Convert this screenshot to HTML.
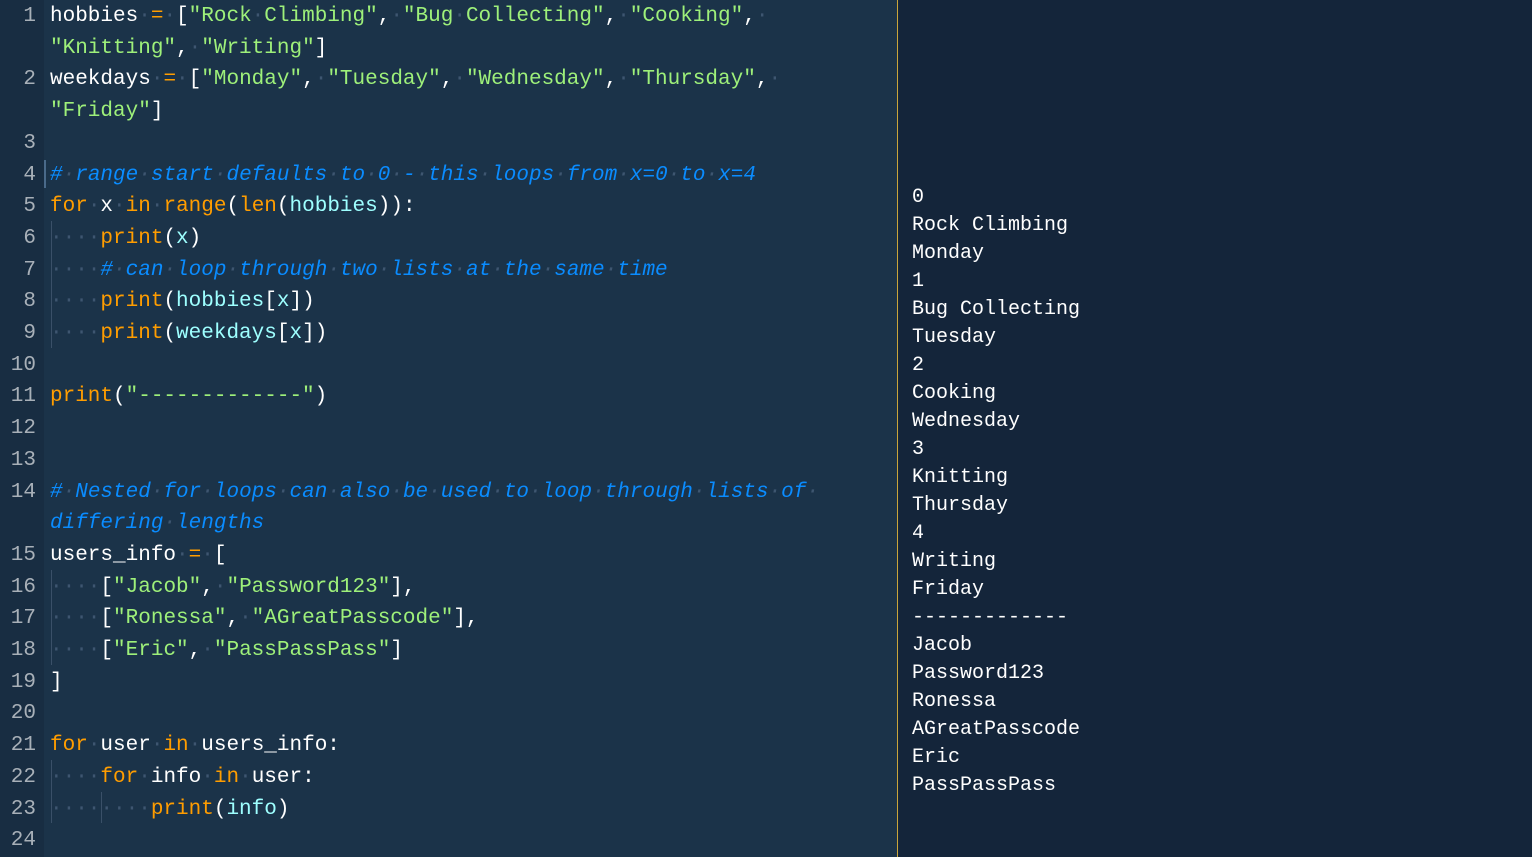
<!DOCTYPE html>
<html><head><meta charset="utf-8"><style>
html,body{margin:0;padding:0;width:1532px;height:857px;overflow:hidden;background:#14253a;}
#ed{position:absolute;left:0;top:0;width:897px;height:857px;background:#1b3349;}
#gut{position:absolute;left:0;top:0;width:44px;height:857px;background:#182d42;}
#div{position:absolute;left:897px;top:0;width:1px;height:857px;background:#c9a53a;}
.code{position:absolute;top:1px;left:0;width:897px;height:856px;overflow:hidden;font-family:"Liberation Mono",monospace;font-size:21px;line-height:31.7px;white-space:pre;color:#fff;}
.ln{position:absolute;left:0;top:0;width:36px;text-align:right;color:#a8b0b8;}
.tx{position:absolute;left:50px;top:0;}
.s{color:#9ef07a}.k{color:#ff9d00}.c{color:#0a8cff;font-style:italic}.a{color:#9effff}.d{color:#3e5670}
#out{position:absolute;left:912px;top:184px;font-family:"Liberation Mono",monospace;font-size:20px;line-height:28px;white-space:pre;color:#fff;}
.g{position:absolute;width:1px;background:#3a5068;}
</style></head><body>
<div id="ed"></div><div id="gut"></div><div id="div"></div>
<div class="g" style="left:51px;top:221px;height:127px"></div>
<div class="g" style="left:51px;top:570px;height:95px"></div>
<div class="g" style="left:51px;top:760px;height:63px"></div>
<div class="g" style="left:101px;top:792px;height:31px"></div>
<div style="position:absolute;left:44px;top:160px;width:2px;height:28px;background:#4a6a8a"></div>
<div class="code"><div class="ln">1
 
2
 
3
4
5
6
7
8
9
10
11
12
13
14
 
15
16
17
18
19
20
21
22
23
24</div><div class="tx">hobbies<span class="d">·</span><span class="k">=</span><span class="d">·</span>[<span class="s">"Rock<span class="d">·</span>Climbing"</span>,<span class="d">·</span><span class="s">"Bug<span class="d">·</span>Collecting"</span>,<span class="d">·</span><span class="s">"Cooking"</span>,<span class="d">·</span>
<span class="s">"Knitting"</span>,<span class="d">·</span><span class="s">"Writing"</span>]
weekdays<span class="d">·</span><span class="k">=</span><span class="d">·</span>[<span class="s">"Monday"</span>,<span class="d">·</span><span class="s">"Tuesday"</span>,<span class="d">·</span><span class="s">"Wednesday"</span>,<span class="d">·</span><span class="s">"Thursday"</span>,<span class="d">·</span>
<span class="s">"Friday"</span>]

<span class="c">#<span class="d">·</span>range<span class="d">·</span>start<span class="d">·</span>defaults<span class="d">·</span>to<span class="d">·</span>0<span class="d">·</span>-<span class="d">·</span>this<span class="d">·</span>loops<span class="d">·</span>from<span class="d">·</span>x=0<span class="d">·</span>to<span class="d">·</span>x=4</span>
<span class="k">for</span><span class="d">·</span>x<span class="d">·</span><span class="k">in</span><span class="d">·</span><span class="k">range</span>(<span class="k">len</span>(<span class="a">hobbies</span>)):
<span class="d">····</span><span class="k">print</span>(<span class="a">x</span>)
<span class="d">····</span><span class="c">#<span class="d">·</span>can<span class="d">·</span>loop<span class="d">·</span>through<span class="d">·</span>two<span class="d">·</span>lists<span class="d">·</span>at<span class="d">·</span>the<span class="d">·</span>same<span class="d">·</span>time</span>
<span class="d">····</span><span class="k">print</span>(<span class="a">hobbies</span>[<span class="a">x</span>])
<span class="d">····</span><span class="k">print</span>(<span class="a">weekdays</span>[<span class="a">x</span>])

<span class="k">print</span>(<span class="s">"-------------"</span>)


<span class="c">#<span class="d">·</span>Nested<span class="d">·</span>for<span class="d">·</span>loops<span class="d">·</span>can<span class="d">·</span>also<span class="d">·</span>be<span class="d">·</span>used<span class="d">·</span>to<span class="d">·</span>loop<span class="d">·</span>through<span class="d">·</span>lists<span class="d">·</span>of<span class="d">·</span></span>
<span class="c">differing<span class="d">·</span>lengths</span>
users_info<span class="d">·</span><span class="k">=</span><span class="d">·</span>[
<span class="d">····</span>[<span class="s">"Jacob"</span>,<span class="d">·</span><span class="s">"Password123"</span>],
<span class="d">····</span>[<span class="s">"Ronessa"</span>,<span class="d">·</span><span class="s">"AGreatPasscode"</span>],
<span class="d">····</span>[<span class="s">"Eric"</span>,<span class="d">·</span><span class="s">"PassPassPass"</span>]
]

<span class="k">for</span><span class="d">·</span>user<span class="d">·</span><span class="k">in</span><span class="d">·</span>users_info:
<span class="d">····</span><span class="k">for</span><span class="d">·</span>info<span class="d">·</span><span class="k">in</span><span class="d">·</span>user:
<span class="d">········</span><span class="k">print</span>(<span class="a">info</span>)</div></div>
<div id="out">0
Rock Climbing
Monday
1
Bug Collecting
Tuesday
2
Cooking
Wednesday
3
Knitting
Thursday
4
Writing
Friday
-------------
Jacob
Password123
Ronessa
AGreatPasscode
Eric
PassPassPass</div>
</body></html>
